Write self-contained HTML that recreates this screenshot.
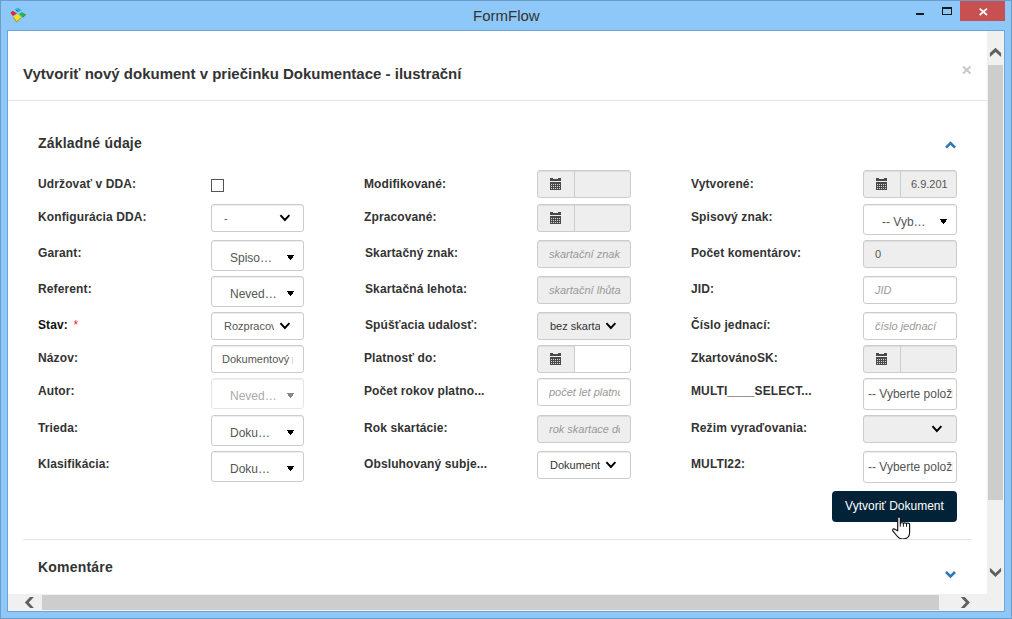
<!DOCTYPE html>
<html><head><meta charset="utf-8">
<style>
*{box-sizing:border-box;margin:0;padding:0}
html,body{width:1012px;height:619px;overflow:hidden;background:#8dc8f8;font-family:"Liberation Sans",sans-serif}
.a{position:absolute}
svg.a{overflow:visible}
.lbl{position:absolute;font-weight:bold;font-size:12px;color:#333;white-space:nowrap;line-height:14px;letter-spacing:0.12px}
.box{position:absolute;border:1px solid #ccc;border-radius:3px;background:#fff;overflow:hidden;box-shadow:inset 0 1px 1px rgba(0,0,0,.075)}
.t{position:absolute;white-space:nowrap;line-height:14px}
</style></head><body>
<!-- window frame -->
<div class="a" style="left:0;top:0;width:1012px;height:619px;border:1px solid #6d9cc9;background:#8dc8f8"></div>
<svg class="a" style="left:0;top:0" width="30" height="26">
<polygon points="14.3,9.4 17.9,7.8 21.8,10.3 18.1,12.6" fill="#30b8f0"/>
<path d="M16 10.2 L18 11.4 M18.5 9.3 L19.5 10" stroke="#1d5f86" stroke-width="0.9"/>
<polygon points="10.5,12.8 12.6,10.7 17,13.4 12.8,16" fill="#dc2a28"/>
<polygon points="19,14.1 21.8,11.9 25.9,14.5 22.5,17.4" fill="#2eb34a"/>
<path d="M22.5 17.4 L25.9 14.5" stroke="#5a6a40" stroke-width="0.8"/>
<polygon points="13.4,17.3 17.1,14.1 21.2,17.5 16.6,21.8" fill="#ffe400"/>
<path d="M13.4 17.3 L16.6 21.8 L21.2 17.5" fill="none" stroke="#8a7a40" stroke-width="0.8"/>
</svg>
<div class="a" style="left:473px;top:7px;font-size:15px;color:#333;line-height:18px">FormFlow</div>
<div class="a" style="left:916px;top:13px;width:8px;height:2px;background:#1a1a1a"></div>
<div class="a" style="left:942px;top:7px;width:10px;height:8px;border:1px solid #1a1a1a;border-top-width:2px"></div>
<div class="a" style="left:960px;top:1px;width:45px;height:20px;background:#c75050"></div>
<svg class="a" style="left:979px;top:8px" width="9" height="8"><path d="M0.7 0.6 L8 7 M8 0.6 L0.7 7" stroke="#fff" stroke-width="1.7"/></svg>

<!-- client -->
<div class="a" style="left:7px;top:30px;width:998px;height:582px;border:1px solid #6fa3d6;background:#fff"></div>

<div class="a" style="left:23px;top:65px;font-size:15px;font-weight:bold;color:#333;line-height:18px">Vytvoriť nový dokument v priečinku Dokumentace - ilustrační</div>
<svg class="a" style="left:962px;top:66px" width="10" height="8"><path d="M1 0.5 L8.5 7.5 M8.5 0.5 L1 7.5" stroke="#c8c8c8" stroke-width="2"/></svg>
<div class="a" style="left:8px;top:100px;width:979px;height:1px;background:#e5e5e5"></div>
<div class="a" style="left:38px;top:135px;font-size:14px;font-weight:bold;color:#333;line-height:17px;letter-spacing:0.2px">Základné údaje</div>
<svg class="a" style="left:945px;top:141px" width="12" height="8"><path d="M1 6.6 L5.5 2.1 L10 6.6" fill="none" stroke="#2f78b8" stroke-width="2.6"/></svg>

<!-- labels col1 -->
<div class="lbl" style="left:38px;top:177px">Udržovať v DDA:</div>
<div class="lbl" style="left:38px;top:210px">Konfigurácia DDA:</div>
<div class="lbl" style="left:38px;top:246px">Garant:</div>
<div class="lbl" style="left:38px;top:282px">Referent:</div>
<div class="lbl" style="left:38px;top:318px;color:#111">Stav: <span style="color:#e22;font-weight:normal;margin-left:2px">*</span></div>
<div class="lbl" style="left:38px;top:351px">Názov:</div>
<div class="lbl" style="left:38px;top:384px">Autor:</div>
<div class="lbl" style="left:38px;top:421px">Trieda:</div>
<div class="lbl" style="left:38px;top:457px">Klasifikácia:</div>
<!-- labels col2 -->
<div class="lbl" style="left:364px;top:177px">Modifikované:</div>
<div class="lbl" style="left:364px;top:210px">Zpracované:</div>
<div class="lbl" style="left:365px;top:246px">Skartačný znak:</div>
<div class="lbl" style="left:365px;top:282px">Skartačná lehota:</div>
<div class="lbl" style="left:365px;top:318px">Spúšťacia udalosť:</div>
<div class="lbl" style="left:364px;top:351px">Platnosť do:</div>
<div class="lbl" style="left:364px;top:384px">Počet rokov platno...</div>
<div class="lbl" style="left:364px;top:421px">Rok skartácie:</div>
<div class="lbl" style="left:364px;top:457px">Obsluhovaný subje...</div>
<!-- labels col3 -->
<div class="lbl" style="left:691px;top:177px">Vytvorené:</div>
<div class="lbl" style="left:691px;top:210px">Spisový znak:</div>
<div class="lbl" style="left:691px;top:246px">Počet komentárov:</div>
<div class="lbl" style="left:691px;top:282px">JID:</div>
<div class="lbl" style="left:691px;top:318px">Číslo jednací:</div>
<div class="lbl" style="left:691px;top:351px">ZkartovánoSK:</div>
<div class="lbl" style="left:691px;top:384px">MULTI____SELECT...</div>
<div class="lbl" style="left:691px;top:421px">Režim vyraďovania:</div>
<div class="lbl" style="left:691px;top:457px">MULTI22:</div>

<!-- inputs -->
<div class="a" style="left:211px;top:179px;width:13px;height:13px;border:1px solid #555;background:#fff"></div>
<div class="box" style="left:211px;top:204px;width:93px;height:28px;background:#fff;border-color:#ccc;"></div>
<div class="t" style="left:224px;top:211px;font-size:11px;color:#555;">-</div>
<svg class="a" style="left:279px;top:213px" width="14" height="10"><path d="M1.4 2.2 L5.9 7 L10.4 2.2" fill="none" stroke="#000" stroke-width="1.9"/></svg>
<div class="box" style="left:211px;top:240px;width:93px;height:31px;background:#fff;border-color:#ccc;"></div>
<div class="t" style="left:230px;top:251px;font-size:12px;color:#555;">Spiso…</div>
<svg class="a" style="left:287px;top:255px" width="7" height="5" shape-rendering="crispEdges"><rect x="0" y="0" width="7" height="1" fill="#000"/><rect x="1" y="1" width="5" height="2" fill="#000"/><rect x="2" y="3" width="3" height="1" fill="#000"/><rect x="3" y="4" width="1" height="1" fill="#000"/></svg>
<div class="box" style="left:211px;top:276px;width:93px;height:31px;background:#fff;border-color:#ccc;"></div>
<div class="t" style="left:230px;top:287px;font-size:12px;color:#555;">Neved…</div>
<svg class="a" style="left:287px;top:291px" width="7" height="5" shape-rendering="crispEdges"><rect x="0" y="0" width="7" height="1" fill="#000"/><rect x="1" y="1" width="5" height="2" fill="#000"/><rect x="2" y="3" width="3" height="1" fill="#000"/><rect x="3" y="4" width="1" height="1" fill="#000"/></svg>
<div class="box" style="left:211px;top:312px;width:93px;height:28px;background:#fff;border-color:#ccc;"></div>
<div class="t" style="left:224px;top:319px;font-size:11px;color:#555;width:50px;overflow:hidden;">Rozpracov</div>
<svg class="a" style="left:279px;top:321px" width="14" height="10"><path d="M1.4 2.2 L5.9 7 L10.4 2.2" fill="none" stroke="#000" stroke-width="1.9"/></svg>
<div class="box" style="left:211px;top:345px;width:93px;height:28px;background:#fff;border-color:#ccc;"></div>
<div class="t" style="left:222px;top:352px;font-size:11px;color:#555;">Dokumentový</div>
<div class="a" style="left:292px;top:357px;width:1px;height:7px;background:#f5d7b0"></div>
<div class="box" style="left:211px;top:378px;width:93px;height:31px;background:#fff;border-color:#e6e6e6;"></div>
<div class="t" style="left:230px;top:389px;font-size:12px;color:#aaa;">Neved…</div>
<svg class="a" style="left:287px;top:393px" width="7" height="5" shape-rendering="crispEdges"><rect x="0" y="0" width="7" height="1" fill="#888"/><rect x="1" y="1" width="5" height="2" fill="#888"/><rect x="2" y="3" width="3" height="1" fill="#888"/><rect x="3" y="4" width="1" height="1" fill="#888"/></svg>
<div class="box" style="left:211px;top:415px;width:93px;height:31px;background:#fff;border-color:#ccc;"></div>
<div class="t" style="left:230px;top:426px;font-size:12px;color:#555;">Doku…</div>
<svg class="a" style="left:287px;top:430px" width="7" height="5" shape-rendering="crispEdges"><rect x="0" y="0" width="7" height="1" fill="#000"/><rect x="1" y="1" width="5" height="2" fill="#000"/><rect x="2" y="3" width="3" height="1" fill="#000"/><rect x="3" y="4" width="1" height="1" fill="#000"/></svg>
<div class="box" style="left:211px;top:451px;width:93px;height:31px;background:#fff;border-color:#ccc;"></div>
<div class="t" style="left:230px;top:462px;font-size:12px;color:#555;">Doku…</div>
<svg class="a" style="left:287px;top:466px" width="7" height="5" shape-rendering="crispEdges"><rect x="0" y="0" width="7" height="1" fill="#000"/><rect x="1" y="1" width="5" height="2" fill="#000"/><rect x="2" y="3" width="3" height="1" fill="#000"/><rect x="3" y="4" width="1" height="1" fill="#000"/></svg>
<div class="box" style="left:537px;top:170px;width:94px;height:28px;background:#eee;border-color:#ccc;"></div><div class="a" style="left:574px;top:171px;width:1px;height:26px;background:#ccc"></div><svg class="a" style="left:550px;top:178px" width="11" height="12" shape-rendering="crispEdges"><rect x="0" y="0" width="3" height="1" fill="#4a4a4a"/><rect x="8" y="0" width="3" height="1" fill="#4a4a4a"/><rect x="0" y="1" width="11" height="2" fill="#4a4a4a"/><rect x="0" y="4" width="11" height="8" fill="#4a4a4a"/><rect x="1" y="6" width="1" height="1" fill="#cfd6d8"/><rect x="3" y="6" width="1" height="1" fill="#cfd6d8"/><rect x="5" y="6" width="1" height="1" fill="#cfd6d8"/><rect x="7" y="6" width="1" height="1" fill="#cfd6d8"/><rect x="9" y="6" width="1" height="1" fill="#cfd6d8"/><rect x="1" y="8" width="1" height="1" fill="#cfd6d8"/><rect x="3" y="8" width="1" height="1" fill="#cfd6d8"/><rect x="5" y="8" width="1" height="1" fill="#cfd6d8"/><rect x="7" y="8" width="1" height="1" fill="#cfd6d8"/><rect x="9" y="8" width="1" height="1" fill="#cfd6d8"/><rect x="1" y="10" width="1" height="1" fill="#cfd6d8"/><rect x="3" y="10" width="1" height="1" fill="#cfd6d8"/><rect x="5" y="10" width="1" height="1" fill="#cfd6d8"/><rect x="7" y="10" width="1" height="1" fill="#cfd6d8"/><rect x="9" y="10" width="1" height="1" fill="#cfd6d8"/></svg>
<div class="box" style="left:537px;top:204px;width:94px;height:28px;background:#eee;border-color:#ccc;"></div><div class="a" style="left:574px;top:205px;width:1px;height:26px;background:#ccc"></div><svg class="a" style="left:550px;top:212px" width="11" height="12" shape-rendering="crispEdges"><rect x="0" y="0" width="3" height="1" fill="#4a4a4a"/><rect x="8" y="0" width="3" height="1" fill="#4a4a4a"/><rect x="0" y="1" width="11" height="2" fill="#4a4a4a"/><rect x="0" y="4" width="11" height="8" fill="#4a4a4a"/><rect x="1" y="6" width="1" height="1" fill="#cfd6d8"/><rect x="3" y="6" width="1" height="1" fill="#cfd6d8"/><rect x="5" y="6" width="1" height="1" fill="#cfd6d8"/><rect x="7" y="6" width="1" height="1" fill="#cfd6d8"/><rect x="9" y="6" width="1" height="1" fill="#cfd6d8"/><rect x="1" y="8" width="1" height="1" fill="#cfd6d8"/><rect x="3" y="8" width="1" height="1" fill="#cfd6d8"/><rect x="5" y="8" width="1" height="1" fill="#cfd6d8"/><rect x="7" y="8" width="1" height="1" fill="#cfd6d8"/><rect x="9" y="8" width="1" height="1" fill="#cfd6d8"/><rect x="1" y="10" width="1" height="1" fill="#cfd6d8"/><rect x="3" y="10" width="1" height="1" fill="#cfd6d8"/><rect x="5" y="10" width="1" height="1" fill="#cfd6d8"/><rect x="7" y="10" width="1" height="1" fill="#cfd6d8"/><rect x="9" y="10" width="1" height="1" fill="#cfd6d8"/></svg>
<div class="box" style="left:537px;top:240px;width:94px;height:28px;background:#eee;border-color:#ccc;"></div>
<div class="t" style="left:549px;top:247px;font-size:11px;color:#999;font-style:italic">skartační znak</div>
<div class="box" style="left:537px;top:276px;width:94px;height:28px;background:#eee;border-color:#ccc;"></div>
<div class="t" style="left:549px;top:283px;font-size:11px;color:#999;font-style:italic">skartační lhůta</div>
<div class="box" style="left:537px;top:312px;width:94px;height:28px;background:#eee;border-color:#ccc;"></div>
<div class="t" style="left:550px;top:319px;font-size:11px;color:#333;width:50px;overflow:hidden;">bez skarta</div>
<svg class="a" style="left:605px;top:321px" width="14" height="10"><path d="M1.4 2.2 L5.9 7 L10.4 2.2" fill="none" stroke="#000" stroke-width="1.9"/></svg>
<div class="box" style="left:537px;top:345px;width:94px;height:28px;background:#eee;border-color:#ccc;"></div><div class="a" style="left:574px;top:346px;width:1px;height:26px;background:#ccc"></div><div class="a" style="left:575px;top:346px;width:55px;height:26px;background:#fff;border-radius:0 3px 3px 0"></div><svg class="a" style="left:550px;top:353px" width="11" height="12" shape-rendering="crispEdges"><rect x="0" y="0" width="3" height="1" fill="#4a4a4a"/><rect x="8" y="0" width="3" height="1" fill="#4a4a4a"/><rect x="0" y="1" width="11" height="2" fill="#4a4a4a"/><rect x="0" y="4" width="11" height="8" fill="#4a4a4a"/><rect x="1" y="6" width="1" height="1" fill="#cfd6d8"/><rect x="3" y="6" width="1" height="1" fill="#cfd6d8"/><rect x="5" y="6" width="1" height="1" fill="#cfd6d8"/><rect x="7" y="6" width="1" height="1" fill="#cfd6d8"/><rect x="9" y="6" width="1" height="1" fill="#cfd6d8"/><rect x="1" y="8" width="1" height="1" fill="#cfd6d8"/><rect x="3" y="8" width="1" height="1" fill="#cfd6d8"/><rect x="5" y="8" width="1" height="1" fill="#cfd6d8"/><rect x="7" y="8" width="1" height="1" fill="#cfd6d8"/><rect x="9" y="8" width="1" height="1" fill="#cfd6d8"/><rect x="1" y="10" width="1" height="1" fill="#cfd6d8"/><rect x="3" y="10" width="1" height="1" fill="#cfd6d8"/><rect x="5" y="10" width="1" height="1" fill="#cfd6d8"/><rect x="7" y="10" width="1" height="1" fill="#cfd6d8"/><rect x="9" y="10" width="1" height="1" fill="#cfd6d8"/></svg>
<div class="box" style="left:537px;top:378px;width:94px;height:28px;background:#fff;border-color:#ccc;"></div>
<div class="t" style="left:549px;top:385px;font-size:11px;color:#999;width:71px;overflow:hidden;font-style:italic">počet let platnosti</div>
<div class="box" style="left:537px;top:415px;width:94px;height:28px;background:#eee;border-color:#ccc;"></div>
<div class="t" style="left:549px;top:422px;font-size:11px;color:#999;width:71px;overflow:hidden;font-style:italic">rok skartace do</div>
<div class="box" style="left:537px;top:451px;width:94px;height:28px;background:#fff;border-color:#ccc;"></div>
<div class="t" style="left:550px;top:458px;font-size:11px;color:#333;">Dokument</div>
<svg class="a" style="left:605px;top:460px" width="14" height="10"><path d="M1.4 2.2 L5.9 7 L10.4 2.2" fill="none" stroke="#000" stroke-width="1.9"/></svg>
<div class="box" style="left:863px;top:170px;width:94px;height:28px;background:#eee;border-color:#ccc;"></div><div class="a" style="left:900px;top:171px;width:1px;height:26px;background:#ccc"></div><svg class="a" style="left:876px;top:178px" width="11" height="12" shape-rendering="crispEdges"><rect x="0" y="0" width="3" height="1" fill="#4a4a4a"/><rect x="8" y="0" width="3" height="1" fill="#4a4a4a"/><rect x="0" y="1" width="11" height="2" fill="#4a4a4a"/><rect x="0" y="4" width="11" height="8" fill="#4a4a4a"/><rect x="1" y="6" width="1" height="1" fill="#cfd6d8"/><rect x="3" y="6" width="1" height="1" fill="#cfd6d8"/><rect x="5" y="6" width="1" height="1" fill="#cfd6d8"/><rect x="7" y="6" width="1" height="1" fill="#cfd6d8"/><rect x="9" y="6" width="1" height="1" fill="#cfd6d8"/><rect x="1" y="8" width="1" height="1" fill="#cfd6d8"/><rect x="3" y="8" width="1" height="1" fill="#cfd6d8"/><rect x="5" y="8" width="1" height="1" fill="#cfd6d8"/><rect x="7" y="8" width="1" height="1" fill="#cfd6d8"/><rect x="9" y="8" width="1" height="1" fill="#cfd6d8"/><rect x="1" y="10" width="1" height="1" fill="#cfd6d8"/><rect x="3" y="10" width="1" height="1" fill="#cfd6d8"/><rect x="5" y="10" width="1" height="1" fill="#cfd6d8"/><rect x="7" y="10" width="1" height="1" fill="#cfd6d8"/><rect x="9" y="10" width="1" height="1" fill="#cfd6d8"/></svg><div class="t" style="left:911px;top:177px;font-size:11px;color:#555;">6.9.201</div>
<div class="box" style="left:863px;top:204px;width:94px;height:31px;background:#fff;border-color:#ccc;"></div>
<div class="t" style="left:882px;top:215px;font-size:12px;color:#555;">-- Vyb…</div>
<svg class="a" style="left:940px;top:219px" width="7" height="5" shape-rendering="crispEdges"><rect x="0" y="0" width="7" height="1" fill="#000"/><rect x="1" y="1" width="5" height="2" fill="#000"/><rect x="2" y="3" width="3" height="1" fill="#000"/><rect x="3" y="4" width="1" height="1" fill="#000"/></svg>
<div class="box" style="left:863px;top:240px;width:94px;height:28px;background:#eee;border-color:#ccc;"></div>
<div class="t" style="left:875px;top:247px;font-size:11px;color:#555;">0</div>
<div class="box" style="left:863px;top:276px;width:94px;height:28px;background:#fff;border-color:#ccc;"></div>
<div class="t" style="left:875px;top:283px;font-size:11px;color:#999;font-style:italic">JID</div>
<div class="box" style="left:863px;top:312px;width:94px;height:28px;background:#fff;border-color:#ccc;"></div>
<div class="t" style="left:875px;top:319px;font-size:11px;color:#999;font-style:italic">číslo jednací</div>
<div class="box" style="left:863px;top:345px;width:94px;height:28px;background:#eee;border-color:#ccc;"></div><div class="a" style="left:900px;top:346px;width:1px;height:26px;background:#ccc"></div><svg class="a" style="left:876px;top:353px" width="11" height="12" shape-rendering="crispEdges"><rect x="0" y="0" width="3" height="1" fill="#4a4a4a"/><rect x="8" y="0" width="3" height="1" fill="#4a4a4a"/><rect x="0" y="1" width="11" height="2" fill="#4a4a4a"/><rect x="0" y="4" width="11" height="8" fill="#4a4a4a"/><rect x="1" y="6" width="1" height="1" fill="#cfd6d8"/><rect x="3" y="6" width="1" height="1" fill="#cfd6d8"/><rect x="5" y="6" width="1" height="1" fill="#cfd6d8"/><rect x="7" y="6" width="1" height="1" fill="#cfd6d8"/><rect x="9" y="6" width="1" height="1" fill="#cfd6d8"/><rect x="1" y="8" width="1" height="1" fill="#cfd6d8"/><rect x="3" y="8" width="1" height="1" fill="#cfd6d8"/><rect x="5" y="8" width="1" height="1" fill="#cfd6d8"/><rect x="7" y="8" width="1" height="1" fill="#cfd6d8"/><rect x="9" y="8" width="1" height="1" fill="#cfd6d8"/><rect x="1" y="10" width="1" height="1" fill="#cfd6d8"/><rect x="3" y="10" width="1" height="1" fill="#cfd6d8"/><rect x="5" y="10" width="1" height="1" fill="#cfd6d8"/><rect x="7" y="10" width="1" height="1" fill="#cfd6d8"/><rect x="9" y="10" width="1" height="1" fill="#cfd6d8"/></svg>
<div class="box" style="left:863px;top:378px;width:94px;height:32px;background:#fff;border-color:#ccc;"></div>
<div class="t" style="left:868px;top:387px;font-size:12px;color:#555;width:85px;overflow:hidden;">-- Vyberte položky</div>
<div class="box" style="left:863px;top:415px;width:94px;height:28px;background:#eee;border-color:#ccc;"></div>
<svg class="a" style="left:931px;top:424px" width="14" height="10"><path d="M1.4 2.2 L5.9 7 L10.4 2.2" fill="none" stroke="#000" stroke-width="1.9"/></svg>
<div class="box" style="left:863px;top:451px;width:94px;height:32px;background:#fff;border-color:#ccc;"></div>
<div class="t" style="left:868px;top:460px;font-size:12px;color:#555;width:85px;overflow:hidden;">-- Vyberte položky</div>
<!-- button -->
<div class="a" style="left:832px;top:491px;width:125px;height:31px;background:#022337;border-radius:4px;color:#fff;font-size:12px;line-height:31px;text-align:center">Vytvoriť Dokument</div>
<!-- cursor -->
<svg class="a" style="left:885px;top:510px" width="35" height="35">
<path d="M12.7 7.9 C12.7 6.6 15.3 6.6 15.3 7.9 L15.3 13.6 C15.3 12.4 18.4 12.4 18.4 13.6 C18.4 12.6 21.5 12.6 21.5 13.8 C21.5 12.8 24.6 12.8 24.6 14.2 L24.6 22.8 C24.6 26.5 21.8 29.1 17.8 29.1 C15.2 29.1 13.5 27.9 12 26 L8 21.2 C7.1 20.1 7.9 18.3 9.3 18.9 L12.7 20.8 Z" fill="#fff" stroke="#111" stroke-width="1.15" stroke-linejoin="round"/>
<path d="M15.3 13.4 L15.3 16.7 M18.4 13.6 L18.4 16.7 M21.5 13.8 L21.5 16.7" stroke="#111" stroke-width="1"/>
</svg>

<div class="a" style="left:23px;top:539px;width:949px;height:1px;background:#e5e5e5"></div>
<div class="a" style="left:38px;top:559px;font-size:14px;font-weight:bold;color:#333;line-height:17px;letter-spacing:0.2px">Komentáre</div>
<svg class="a" style="left:945px;top:570px" width="12" height="9"><path d="M1 2 L5.5 6.5 L10 2" fill="none" stroke="#2f78b8" stroke-width="2.6"/></svg>

<!-- scrollbars -->
<div class="a" style="left:987px;top:31px;width:17px;height:580px;background:#f0f0f0"></div>
<div class="a" style="left:1003px;top:31px;width:1px;height:580px;background:#f6f1ec"></div>
<div class="a" style="left:988px;top:65px;width:15px;height:435px;background:#cdcdcd"></div>
<svg class="a" style="left:989px;top:47px" width="13" height="11"><polygon points="0.9,9.9 6.5,4.9 12.1,9.9 12.1,6.1 6.5,0.8 0.9,6.0" fill="#606060"/></svg>
<svg class="a" style="left:989px;top:567px" width="13" height="11"><polygon points="0.9,0.8 6.5,5.9 12.1,0.8 12.1,4.6 6.5,9.9 0.9,4.7" fill="#606060"/></svg>
<div class="a" style="left:8px;top:594px;width:979px;height:17px;background:#f0f0f0"></div>
<div class="a" style="left:8px;top:610px;width:996px;height:1px;background:#f6f1ec"></div>
<div class="a" style="left:42px;top:595px;width:897px;height:15px;background:#cdcdcd"></div>
<svg class="a" style="left:24px;top:596px" width="11" height="13"><polygon points="9.9,0.9 4.8,6.5 9.9,12.1 6.1,12.1 0.8,6.5 6.0,0.9" fill="#606060"/></svg>
<svg class="a" style="left:960px;top:596px" width="11" height="13"><polygon points="0.8,0.9 5.9,6.5 0.8,12.1 4.6,12.1 9.9,6.5 4.7,0.9" fill="#606060"/></svg>
</body></html>
